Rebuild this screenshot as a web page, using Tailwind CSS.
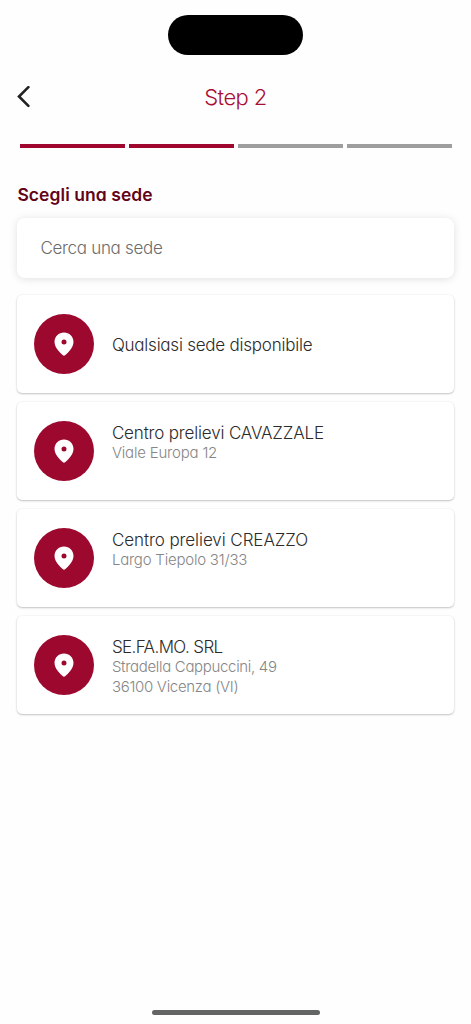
<!DOCTYPE html>
<html lang="it">
<head>
<meta charset="utf-8">
<meta name="viewport" content="width=device-width, initial-scale=1">
<title>Step 2</title>
<script src="https://cdn.jsdelivr.net/npm/@tailwindcss/browser@4"></script>
</head>
<body class="bg-[#fefefe]">
<svg class="hidden"><symbol id="pin" viewBox="0 0 20 24"><path fill="#fff" fill-rule="evenodd" d="M10 .5C4.700.5.500 4.600.500 9.800c0 3.300 1.400 5.900 3.500 8.500 1.500 1.900 3.300 3.500 4.900 4.900.7.600 1.500.6 2.200 0 1.600-1.400 3.400-3 4.900-4.900 2.100-2.600 3.500-5.200 3.500-8.500C19.500 4.600 15.300.5 10 .5Zm0 7a2.500 2.500 0 1 1 0 5 2.500 2.500 0 0 1 0-5Z"/></symbol></svg>
<div class="flex h-[1024px] w-[471px] flex-col overflow-hidden font-[Inter,Quicksand,sans-serif] font-[270] whitespace-nowrap [font-feature-settings:'cv11']">
  <div class="mx-auto mt-[15px] h-[39.500px] w-[134.500px] shrink-0 rounded-[20px] bg-black"></div>
  <header class="mt-[26.500px] grid h-8 grid-cols-[1fr_auto_1fr] items-center px-[17px]">
    <svg class="h-[22px] w-[14px]" viewBox="0 0 14 22" fill="none" stroke="#222" stroke-width="2.600" stroke-linecap="round" stroke-linejoin="miter"><path d="M11.400 1.200 2 10.500l9.400 9.300"/></svg>
    <h1 class="text-[22px] leading-8 tracking-[-0.600px] text-[#a90e35]">Step 2</h1>
  </header>
  <div class="mt-[30.500px] flex h-[4.500px] shrink-0 gap-[4px] pr-[19.500px] pl-[19.500px]">
    <div class="flex-1 bg-[#a0072e]"></div><div class="flex-1 bg-[#a0072e]"></div><div class="flex-1 bg-[#9e9e9e]"></div><div class="flex-1 bg-[#9e9e9e]"></div>
  </div>
  <main class="mr-[17px] ml-[17.400px] mt-[34px] flex flex-col">
    <h2 class="h-[28px] text-[17.500px] leading-[25px] font-semibold tracking-[0.060px] text-[#630317]">Scegli una sede</h2>
    <div class="mt-[7.600px] flex h-[60px] items-center rounded-lg bg-white px-[23px] pt-0.5 text-[17px] tracking-[-0.300px] text-[#6c6c6c] shadow-[0_1px_8px_rgba(0,0,0,0.120)]">Cerca una sede</div>
    <ul class="mt-[17px] flex flex-col gap-[9px] text-[17px] leading-5 text-[#2b2b2b]">
      <li class="flex h-[98px] items-center rounded-[5px] bg-white pl-[17px] shadow-[0_1px_2px_rgba(0,0,0,0.220),0_0_2px_rgba(0,0,0,0.080)]">
        <div class="flex size-[60px] items-center justify-center rounded-full bg-[#9d092e]"><svg class="h-[24px] w-[20px]"><use href="#pin"/></svg></div>
        <p class="ml-[17.500px] pt-0.5 tracking-[-0.230px]">Qualsiasi sede disponibile</p>
      </li>
      <li class="flex h-[98px] items-center rounded-[5px] bg-white pl-[17px] shadow-[0_1px_2px_rgba(0,0,0,0.220),0_0_2px_rgba(0,0,0,0.080)]">
        <div class="flex size-[60px] items-center justify-center rounded-full bg-[#9d092e]"><svg class="h-[24px] w-[20px]"><use href="#pin"/></svg></div>
        <div class="ml-[17.500px] h-[56px]"><p class="tracking-[-0.160px]">Centro prelievi CAVAZZALE</p><p class="text-[15px] tracking-[-0.200px] text-[#868686]">Viale Europa 12</p></div>
      </li>
      <li class="flex h-[98px] items-center rounded-[5px] bg-white pl-[17px] shadow-[0_1px_2px_rgba(0,0,0,0.220),0_0_2px_rgba(0,0,0,0.080)]">
        <div class="flex size-[60px] items-center justify-center rounded-full bg-[#9d092e]"><svg class="h-[24px] w-[20px]"><use href="#pin"/></svg></div>
        <div class="ml-[17.500px] h-[56px]"><p class="tracking-[-0.070px]">Centro prelievi CREAZZO</p><p class="text-[15px] tracking-[-0.220px] text-[#868686]">Largo Tiepolo 31/33</p></div>
      </li>
      <li class="flex h-[98px] items-center rounded-[5px] bg-white pl-[17px] shadow-[0_1px_2px_rgba(0,0,0,0.220),0_0_2px_rgba(0,0,0,0.080)]">
        <div class="flex size-[60px] items-center justify-center rounded-full bg-[#9d092e]"><svg class="h-[24px] w-[20px]"><use href="#pin"/></svg></div>
        <div class="ml-[17.500px] h-[56px]"><p class="tracking-[-0.600px]">SE.FA.MO. SRL</p><p class="text-[15px] tracking-[-0.320px] text-[#868686]">Stradella Cappuccini, 49</p><p class="text-[15px] leading-[19px] tracking-[-0.300px] text-[#868686]">36100 Vicenza (VI)</p></div>
      </li>
    </ul>
  </main>
  <div class="mx-auto mt-auto mb-[9px] h-[5.500px] w-[168px] shrink-0 rounded-full bg-[#636564]"></div>
</div>
</body>
</html>
